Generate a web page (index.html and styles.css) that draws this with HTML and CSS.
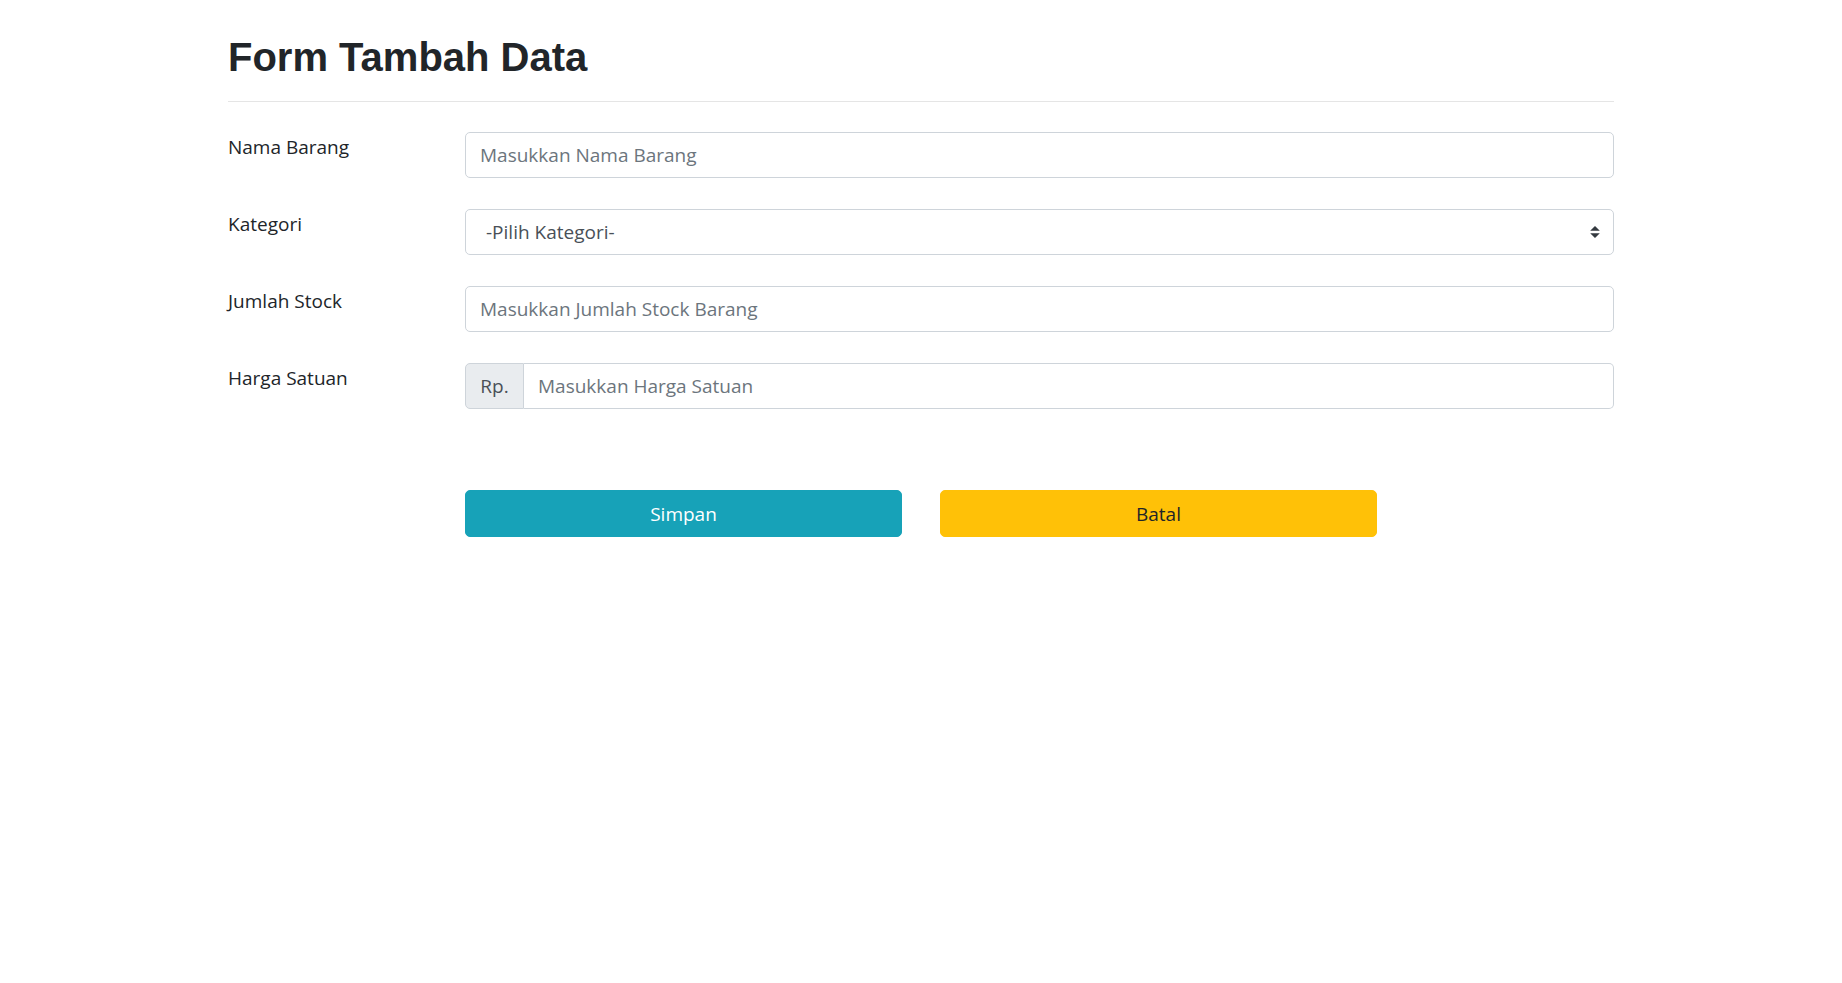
FILE: index.html
```html
<!DOCTYPE html>
<html lang="id">
<head>
<meta charset="utf-8">
<title>Form Tambah Data</title>
<link rel="stylesheet" href="styles.css">
</head>
<body>
<div class="container">
  <h1 class="title">Form Tambah Data</h1>
  <hr class="divider">
  <form class="form">
    <div class="form-row">
      <label class="label" for="nama">Nama Barang</label>
      <input class="control" id="nama" type="text" placeholder="Masukkan Nama Barang">
    </div>
    <div class="form-row">
      <label class="label" for="kategori">Kategori</label>
      <div class="select-wrap">
        <select class="control select" id="kategori">
          <option>-Pilih Kategori-</option>
        </select>
        <svg class="select-arrow" viewBox="0 0 4 5" width="10" height="12" aria-hidden="true"><path d="M2 0L0 2h4zm0 5L0 3h4z" fill="#343a40"/></svg>
      </div>
    </div>
    <div class="form-row">
      <label class="label" for="stock">Jumlah Stock</label>
      <input class="control" id="stock" type="text" placeholder="Masukkan Jumlah Stock Barang">
    </div>
    <div class="form-row">
      <label class="label" for="harga">Harga Satuan</label>
      <div class="input-group">
        <span class="addon">Rp.</span>
        <input class="control grouped" id="harga" type="text" placeholder="Masukkan Harga Satuan">
      </div>
    </div>
    <div class="actions">
      <button type="button" class="btn btn-info">Simpan</button>
      <button type="button" class="btn btn-warning">Batal</button>
    </div>
  </form>
</div>
</body>
</html>
```
FILE: styles.css
```css
* { box-sizing: border-box; }

body {
  margin: 0;
  background: #fff;
  color: #212529;
  font-family: "Open Sans", "Noto Sans", sans-serif;
  font-size: 19px;
  line-height: 1.5;
}

.container {
  width: 1386px;
  margin: 0 auto;
}

.title {
  margin: 33px 0 0;
  font-family: "Liberation Sans", Arial, sans-serif;
  font-weight: bold;
  font-size: 40px;
  line-height: 48px;
  color: #212529;
}

.divider {
  margin: 20px 0 30px;
  border: 0;
  border-top: 1px solid rgba(0, 0, 0, 0.1);
  height: 0;
}

.form {
  display: flex;
  flex-direction: column;
  gap: 31px;
}

.form-row {
  display: grid;
  grid-template-columns: 201px 1fr;
  column-gap: 36px;
  align-items: start;
}

.label {
  display: block;
  line-height: 28px;
  padding-top: 1px;
}

.control {
  display: block;
  width: 100%;
  height: 46px;
  padding: 0 14px;
  font-family: inherit;
  font-size: 19px;
  color: #495057;
  background: #fff;
  border: 1px solid #ced4da;
  border-radius: 5px;
  outline: none;
}

.control::placeholder {
  color: #6c757d;
  opacity: 1;
}

.select-wrap {
  position: relative;
}

.select {
  appearance: none;
  -webkit-appearance: none;
  padding-left: 20px;
  padding-right: 36px;
}

.select-arrow {
  position: absolute;
  right: 14px;
  top: 17px;
  pointer-events: none;
}

.input-group {
  display: flex;
}

.addon {
  display: flex;
  align-items: center;
  justify-content: center;
  width: 59px;
  height: 46px;
  padding: 0;
  background: #e9ecef;
  border: 1px solid #ced4da;
  border-radius: 5px 0 0 5px;
  color: #495057;
  font-size: 19px;
}

.grouped {
  flex: 1;
  border-left: 0;
  border-radius: 0 5px 5px 0;
}

.actions {
  display: flex;
  gap: 38px;
  margin: 50px 0 0 237px;
}

.btn {
  width: 437px;
  height: 47px;
  border: 1px solid transparent;
  border-radius: 5px;
  font-family: inherit;
  font-size: 19px;
  cursor: pointer;
}

.btn-info {
  background: #17a2b8;
  border-color: #17a2b8;
  color: #fff;
}

.btn-warning {
  background: #ffc107;
  border-color: #ffc107;
  color: #212529;
}
```
